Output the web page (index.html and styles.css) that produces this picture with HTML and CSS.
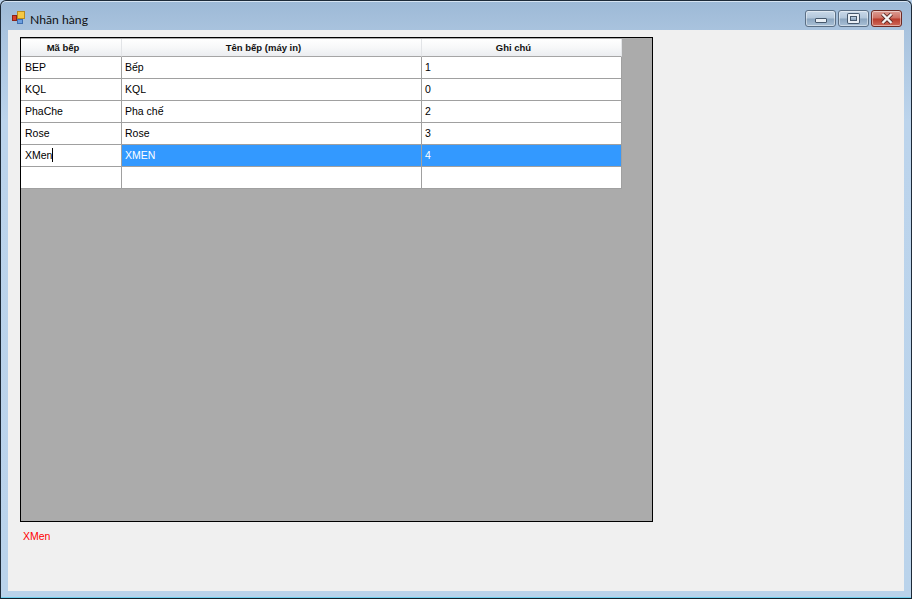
FILE: index.html
```html
<!DOCTYPE html>
<html lang="en">
<head>
  <meta charset="UTF-8" />
  <title>Nhãn hàng</title>
  <link rel="stylesheet" href="styles.css">
</head>
<body>
  <div class="window">
    <div class="titlebar">
      <svg class="app-icon" width="16" height="16" viewBox="0 0 16 16">
        <rect x="6.5" y="1.5" width="7" height="7" fill="#f5c842" stroke="#b98a1e"/>
        <rect x="1.5" y="5.5" width="4" height="5" fill="#d8402c" stroke="#8e2418"/>
        <rect x="6.5" y="9.5" width="5" height="4" fill="#6c9fe0" stroke="#3f6fb0"/>
      </svg>
      <span class="title">Nhãn hàng</span>
      <div class="caption-btns">
        <div class="cap-btn"><span class="min-glyph"></span></div>
        <div class="cap-btn"><span class="max-glyph"></span></div>
        <div class="cap-btn close-btn">
          <svg width="16" height="11" viewBox="0 0 16 11">
            <path d="M3.5 1 L12.5 10 M12.5 1 L3.5 10" stroke="#5a2a26" stroke-width="4"/>
            <path d="M3.5 1 L12.5 10 M12.5 1 L3.5 10" stroke="#f4f4f4" stroke-width="2.4"/>
          </svg>
        </div>
      </div>
    </div>
    <div class="client">
      <div class="grid-box">
        <table class="grid">
          <thead>
            <tr>
              <th class="col-code">Mã bếp</th>
              <th class="col-name">Tên bếp (máy in)</th>
              <th class="col-note">Ghi chú</th>
            </tr>
          </thead>
          <tbody>
            <tr><td>BEP</td><td>Bếp</td><td>1</td></tr>
            <tr><td>KQL</td><td>KQL</td><td>0</td></tr>
            <tr><td>PhaChe</td><td>Pha chế</td><td>2</td></tr>
            <tr><td>Rose</td><td>Rose</td><td>3</td></tr>
            <tr class="selected"><td class="editing">XMen<span class="caret"></span></td><td>XMEN</td><td>4</td></tr>
            <tr><td></td><td></td><td></td></tr>
          </tbody>
        </table>
      </div>
      <div class="status">XMen</div>
    </div>
  </div>
</body>
</html>
```

FILE: styles.css
```css
* {
  box-sizing: border-box;
}

html, body {
  margin: 0;
  padding: 0;
  height: 100%;
  overflow: hidden;
}

body {
  font-family: 'Liberation Sans', Arial, sans-serif;
  background: #b9d1ea;
}

.window {
  width: 912px;
  height: 599px;
  display: flex;
  flex-direction: column;
  padding: 0 7px 7px;
  background: linear-gradient(to bottom, #9db9d6 0, #a9c3de 30px, #bcd4ec 120px, #bad3eb 100%);
  border: 1px solid #1d2a38;
  border-bottom-color: #12202c;
  border-radius: 6px 6px 0 0;
  box-shadow: inset 0 1px 0 #d6e4f2, inset 0 -1px 0 #6fd0ee;
}

.titlebar {
  height: 29px;
  padding-top: 5px;
  display: flex;
  align-items: center;
  flex-shrink: 0;
}

.app-icon {
  margin: 0 3px 0 3px;
  flex-shrink: 0;
}

.title {
  font-family: Lato, 'Liberation Sans', sans-serif;
  font-size: 12.2px;
  color: #111;
  margin-top: 2px;
}

.caption-btns {
  margin-left: auto;
  margin-right: 2px;
  display: flex;
  gap: 2px;
}

.cap-btn {
  width: 31px;
  height: 17px;
  border: 1px solid #5b6f85;
  border-radius: 3px;
  background: linear-gradient(to bottom, #c9d9e9 0, #b2c6da 48%, #8ba5bf 52%, #a9c0d6 100%);
  box-shadow: inset 0 0 0 1px rgba(255,255,255,0.45);
  display: flex;
  align-items: center;
  justify-content: center;
}

.close-btn {
  border-color: #6d2a24;
  background: linear-gradient(to bottom, #dc9d94 0, #ce6f62 48%, #b83a2b 52%, #cf6a5a 100%);
}

.min-glyph {
  width: 12px;
  height: 5px;
  margin-top: 5px;
  background: #e9eff5;
  border: 1px solid #46586c;
  border-radius: 1px;
}

.max-glyph {
  width: 11px;
  height: 9px;
  background: transparent;
  border: 2px solid #e9eff5;
  box-shadow: 0 0 0 1px #46586c, inset 0 0 0 1px #46586c;
  border-radius: 1px;
}

.client {
  flex: 1;
  background: #f0f0f0;
  padding: 7px 0 0 12px;
  min-height: 0;
}

.grid-box {
  width: 633px;
  height: 485px;
  background: #ababab;
  border: 1px solid #000;
  padding: 1px 0 0 0;
}

.grid {
  border-collapse: separate;
  border-spacing: 0;
  table-layout: fixed;
  width: 601px;
  font-size: 10.5px;
  color: #000;
}

.grid th {
  height: 18px;
  padding: 0 16px 0 0;
  font-size: 9.5px;
  font-weight: bold;
  text-align: center;
  color: #111;
  background: linear-gradient(to bottom, #ffffff 0, #f7f8f9 50%, #ebedf0 100%);
  border-right: 1px solid #e2e4e7;
  border-bottom: 1px solid #a5a5a5;
}

.col-code {
  width: 101px;
}

.col-name {
  width: 300px;
}

.col-note {
  width: 200px;
}

.grid td {
  height: 22px;
  padding: 0 0 2px 3px;
  background: #fff;
  border-right: 1px solid #a0a0a0;
  border-bottom: 1px solid #a0a0a0;
  white-space: nowrap;
}

.grid td:first-child {
  padding-left: 4px;
}

.grid .selected td {
  background: #3399ff;
  color: #fff;
}

.grid .selected td.editing {
  background: #fff;
  color: #000;
}

.caret {
  display: inline-block;
  width: 1px;
  height: 14px;
  background: #000;
  vertical-align: -3px;
}

.status {
  margin-top: 8px;
  margin-left: 3px;
  font-size: 10.5px;
  color: #ff0000;
}
```
